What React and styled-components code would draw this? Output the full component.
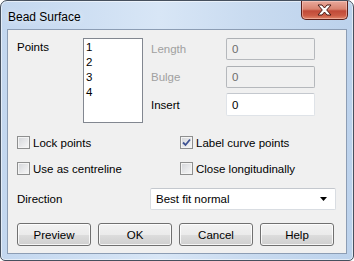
import React from "react";
import styled, { createGlobalStyle } from "styled-components";

const Global = createGlobalStyle`
  html, body { margin: 0; padding: 0; background: #ffffff; }
  body { font-family: "Liberation Sans", Arial, sans-serif; font-size: 11.5px; }
  * { box-sizing: border-box; }
`;

const Window = styled.div`
  width: 354px;
  height: 261px;
  border: 1px solid #46505e;
  border-radius: 7px 7px 5px 5px;
  background: linear-gradient(to right, #c3d7ef 0%, #d8e6f6 45%, #c9dbf0 70%, #bcd2ec 100%);
  box-shadow: inset 0 0 0 1px rgba(255, 255, 255, 0.55);
  padding: 0 6px 6px 6px;
  display: flex;
  flex-direction: column;
`;

const TitleBar = styled.div`
  height: 28px;
  display: flex;
  align-items: flex-start;
  justify-content: space-between;
`;

const Title = styled.div`
  font-size: 12px;
  color: #000;
  padding: 9px 0 0 1px;
  text-shadow: 0 0 6px rgba(255, 255, 255, 0.9);
`;

const CloseButton = styled.div`
  width: 47px;
  height: 19px;
  margin-right: -1px;
  border: 1px solid #5a1f1a;
  border-top: none;
  border-radius: 0 0 5px 5px;
  background: linear-gradient(to bottom, #e9a99c 0%, #d98470 45%, #c14a38 55%, #cc5b45 80%, #e0866b 100%);
  box-shadow: inset 0 0 0 1px rgba(255, 220, 210, 0.45);
  display: flex;
  align-items: center;
  justify-content: center;
`;

const Client = styled.div`
  flex: 1;
  border: 1px solid #8c9db4;
  background: #f0f0f0;
  padding: 8px 0 0 9px;
  display: flex;
  flex-direction: column;
`;

const TopSection = styled.div`
  display: flex;
  align-items: flex-start;
`;

const PointsLabel = styled.div`
  width: 66px;
  margin-top: 3px;
  color: #000;
`;

const ListBox = styled.div`
  width: 60px;
  height: 85px;
  background: #fff;
  border: 1px solid #828790;
  padding: 1px 0 0 2px;
  display: flex;
  flex-direction: column;
`;

const ListItem = styled.div`
  height: 15px;
  line-height: 15px;
  color: #000;
`;

const Fields = styled.div`
  margin-left: 8px;
  display: flex;
  flex-direction: column;
`;

const FieldRow = styled.div`
  display: flex;
  align-items: center;
  margin-top: ${(p) => p.$mt || 0}px;
`;

const SideLabel = styled.div`
  width: 75px;
  color: ${(p) => (p.$disabled ? "#a0a0a0" : "#000")};
`;

const TextBox = styled.div`
  width: 89px;
  height: ${(p) => p.$h || 22}px;
  border: 1px solid ${(p) => (p.$disabled ? "#b5b8bc" : "#dfe3e8")};
  border-top-color: ${(p) => (p.$disabled ? "#adb0b4" : "#c4c8ce")};
  border-radius: 2px;
  background: ${(p) => (p.$disabled ? "#f0f0f0" : "#fff")};
  color: ${(p) => (p.$disabled ? "#6d6d6d" : "#000")};
  padding-left: 5px;
  display: flex;
  align-items: center;
`;

const CheckGrid = styled.div`
  margin-top: 13px;
  display: grid;
  grid-template-columns: 163px 1fr;
  grid-auto-rows: 13px;
  row-gap: 13px;
`;

const CheckRow = styled.div`
  display: flex;
  align-items: center;
  gap: 3px;
  height: 13px;
  color: #000;
  white-space: nowrap;
`;

const Box = styled.div`
  width: 13px;
  height: 13px;
  flex: none;
  border: 1px solid #8e8f8f;
  background: linear-gradient(135deg, #d2d4d8 0%, #e6e7e9 50%, #f8f8f8 100%);
  box-shadow: inset 0 0 0 1px #f4f4f4;
  display: flex;
  align-items: center;
  justify-content: center;
`;

const DirectionRow = styled.div`
  margin-top: 13px;
  display: flex;
  align-items: center;
`;

const DirLabel = styled.div`
  width: 133px;
  color: #000;
`;

const Select = styled.div`
  width: 186px;
  height: 22px;
  border: 1px solid #d9dde2;
  border-top-color: #c4c8ce;
  border-radius: 2px;
  background: #fff;
  padding: 0 8px 0 5px;
  display: flex;
  align-items: center;
  justify-content: space-between;
  color: #000;
`;

const ButtonRow = styled.div`
  margin-top: 13px;
  display: flex;
  gap: 7px;
`;

const Button = styled.div`
  width: 74px;
  height: 23px;
  border: 1px solid #707070;
  border-radius: 3px;
  background: linear-gradient(to bottom, #f2f2f2 0%, #ebebeb 50%, #dddddd 51%, #cfcfcf 100%);
  box-shadow: inset 0 0 0 1px rgba(255, 255, 255, 0.8);
  display: flex;
  align-items: center;
  justify-content: center;
  color: #000;
`;

const CloseIcon = () => (
  <svg width="15" height="12" viewBox="0 0 15 12">
    <path
      d="M1 1 L5 1 L7.5 4 L10 1 L14 1 L9.7 6 L14 11 L10 11 L7.5 8 L5 11 L1 11 L5.3 6 Z"
      fill="#ffffff"
      stroke="#4a1a14"
      strokeWidth="1"
      strokeLinejoin="round"
    />
  </svg>
);

const CheckMark = () => (
  <svg width="9" height="9" viewBox="0 0 9 9">
    <path d="M1 4.5 L3.5 7 L8 1.5" fill="none" stroke="#3f5393" strokeWidth="1.8" />
  </svg>
);

const Arrow = () => (
  <svg width="7" height="4" viewBox="0 0 7 4">
    <path d="M0 0 H7 L3.5 4 Z" fill="#000" />
  </svg>
);

const Check = ({ checked, children }) => (
  <CheckRow>
    <Box>{checked && <CheckMark />}</Box>
    <span>{children}</span>
  </CheckRow>
);

export default function App() {
  return (
    <>
      <Global />
      <Window>
        <TitleBar>
          <Title>Bead Surface</Title>
          <CloseButton>
            <CloseIcon />
          </CloseButton>
        </TitleBar>
        <Client>
          <TopSection>
            <PointsLabel>Points</PointsLabel>
            <ListBox>
              {["1", "2", "3", "4"].map((i) => (
                <ListItem key={i}>{i}</ListItem>
              ))}
            </ListBox>
            <Fields>
              <FieldRow>
                <SideLabel $disabled>Length</SideLabel>
                <TextBox $disabled>0</TextBox>
              </FieldRow>
              <FieldRow $mt={6}>
                <SideLabel $disabled>Bulge</SideLabel>
                <TextBox $disabled>0</TextBox>
              </FieldRow>
              <FieldRow $mt={5}>
                <SideLabel>Insert</SideLabel>
                <TextBox $h={23}>0</TextBox>
              </FieldRow>
            </Fields>
          </TopSection>
          <CheckGrid>
            <Check>Lock points</Check>
            <Check checked>Label curve points</Check>
            <Check>Use as centreline</Check>
            <Check>Close longitudinally</Check>
          </CheckGrid>
          <DirectionRow>
            <DirLabel>Direction</DirLabel>
            <Select>
              <span>Best fit normal</span>
              <Arrow />
            </Select>
          </DirectionRow>
          <ButtonRow>
            <Button>Preview</Button>
            <Button>OK</Button>
            <Button>Cancel</Button>
            <Button>Help</Button>
          </ButtonRow>
        </Client>
      </Window>
    </>
  );
}
